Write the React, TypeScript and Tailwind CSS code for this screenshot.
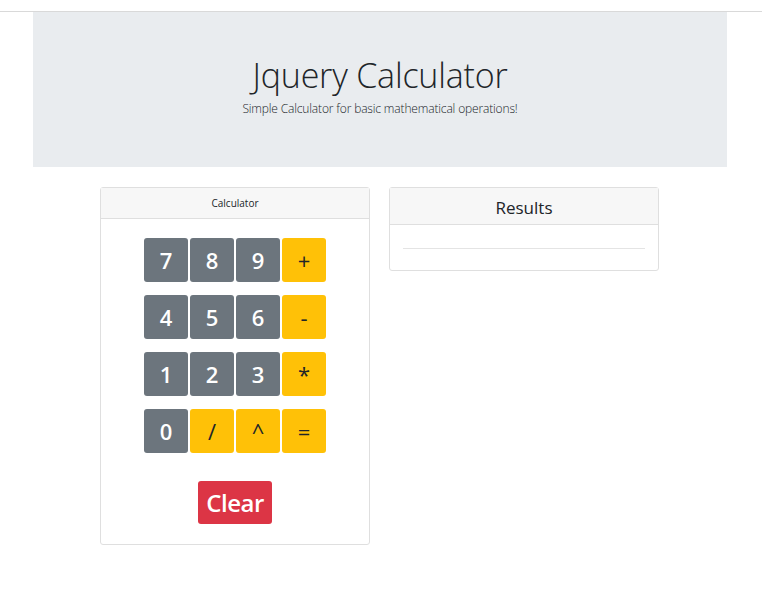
import React from "react";

const rows: { label: string; kind: "num" | "op" }[][] = [
  [
    { label: "7", kind: "num" },
    { label: "8", kind: "num" },
    { label: "9", kind: "num" },
    { label: "+", kind: "op" },
  ],
  [
    { label: "4", kind: "num" },
    { label: "5", kind: "num" },
    { label: "6", kind: "num" },
    { label: "-", kind: "op" },
  ],
  [
    { label: "1", kind: "num" },
    { label: "2", kind: "num" },
    { label: "3", kind: "num" },
    { label: "*", kind: "op" },
  ],
  [
    { label: "0", kind: "num" },
    { label: "/", kind: "op" },
    { label: "^", kind: "op" },
    { label: "=", kind: "op" },
  ],
];

export default function App() {
  return (
    <div
      className="w-[762px] h-[598px] bg-white overflow-hidden"
      style={{ fontFamily: '"Open Sans", "Noto Sans", sans-serif' }}
    >
      <div className="h-[11px]" />
      <div className="h-px bg-[#d9d9d9]" />
      <div className="ml-[33px] w-[694px] h-[155px] bg-[#e9ecef] flex flex-col items-center justify-center pb-[6px]">
        <h1 className="text-[34px] font-light text-[#212529] leading-none tracking-[-0.2px]">
          Jquery Calculator
        </h1>
        <p className="text-[12px] font-light text-[#212529] mt-[11px] leading-none tracking-[-0.15px]">
          Simple Calculator for basic mathematical operations!
        </p>
      </div>
      <div className="flex gap-[19px] ml-[100px] mt-[20px] items-start">
        <div className="w-[270px] border border-[#dfdfdf] rounded-[3px] flex flex-col">
          <div className="h-[31px] bg-[#f7f7f7] border-b border-[#dfdfdf] flex items-center justify-center text-[10px] text-[#212529] pt-[1px]">
            Calculator
          </div>
          <div className="flex flex-col items-center pt-[19px] pb-[20px]">
            <div className="flex flex-col gap-[13px]">
              {rows.map((row, i) => (
                <div key={i} className="flex gap-[2px]">
                  {row.map((b) => (
                    <div
                      key={b.label}
                      className={
                        b.kind === "num"
                          ? "w-[44px] h-[44px] rounded-[3px] bg-[#6c757d] text-white flex items-center justify-center text-[22px] font-semibold"
                          : "w-[44px] h-[44px] rounded-[3px] bg-[#ffc107] text-[#212529] flex items-center justify-center text-[22px] font-normal"
                      }
                    >
                      {b.label}
                    </div>
                  ))}
                </div>
              ))}
            </div>
            <div className="mt-[28px] w-[74px] h-[43px] rounded-[3px] bg-[#dc3545] text-white flex items-center justify-center text-[24px] font-semibold tracking-[-0.5px]">
              Clear
            </div>
          </div>
        </div>
        <div className="w-[270px] border border-[#dfdfdf] rounded-[3px] flex flex-col">
          <div className="h-[37px] bg-[#f7f7f7] border-b border-[#dfdfdf] flex items-center justify-center text-[17px] font-medium text-[#212529] pt-[3px]">
            Results
          </div>
          <div className="px-[13px] pt-[23px] pb-[21px]">
            <div className="h-px bg-[#e4e4e4]" />
          </div>
        </div>
      </div>
    </div>
  );
}
